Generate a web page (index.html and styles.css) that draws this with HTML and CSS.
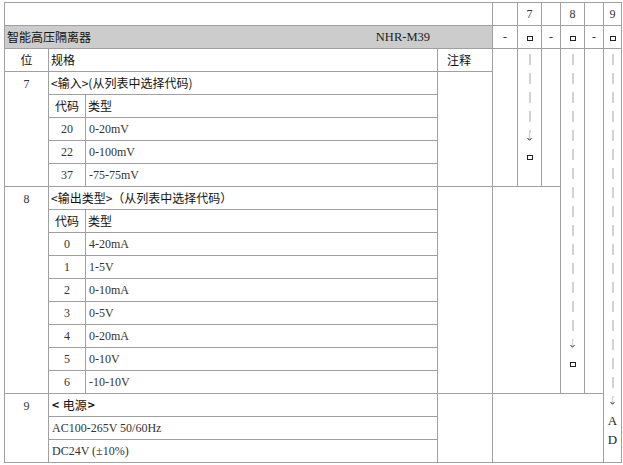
FILE: index.html
```html
<!DOCTYPE html>
<html lang="zh">
<head>
<meta charset="utf-8">
<title>智能高压隔离器 NHR-M39</title>
<link rel="stylesheet" href="styles.css">
</head>
<body>
<table class="spec">
  <colgroup>
    <col class="w-pos"><col class="w-code"><col class="w-type"><col class="w-note">
    <col class="w-sep"><col class="w-d7"><col class="w-sep2"><col class="w-d8"><col class="w-sep3"><col class="w-d9">
  </colgroup>
  <tr>
    <td colspan="4"></td><td></td><td class="c num">7</td><td></td><td class="c num">8</td><td></td><td class="c num">9</td>
  </tr>
  <tr>
    <td colspan="4" class="title">
      <div class="title-in"><span class="zh">智能高压隔离器</span><span class="model">NHR-M39</span></div>
    </td>
    <td class="c num">-</td><td class="c"><span class="box"></span></td>
    <td class="c num">-</td><td class="c"><span class="box"></span></td>
    <td class="c num">-</td><td class="c"><span class="box"></span></td>
  </tr>
  <tr>
    <td class="c zh">位</td>
    <td colspan="2" class="zh pl">规格</td>
    <td class="zh note-h">注释</td>
    <td rowspan="6"></td>
    <td rowspan="6" class="track-cell">
      <div class="track"><div class="dash d7"></div><svg class="arrow" width="7" height="8" viewBox="0 0 7 8"><path d="M3.5 0V7" stroke="#d4d4d8" stroke-width="1.5"/><path d="M1.5 5L3.5 7.3L5.5 5" fill="none" stroke="#333" stroke-width="1"/></svg><span class="box mt"></span></div>
    </td>
    <td rowspan="6"></td>
    <td rowspan="15" class="track-cell">
      <div class="track"><div class="dash d8"></div><svg class="arrow" width="7" height="8" viewBox="0 0 7 8"><path d="M3.5 0V7" stroke="#d4d4d8" stroke-width="1.5"/><path d="M1.5 5L3.5 7.3L5.5 5" fill="none" stroke="#333" stroke-width="1"/></svg><span class="box mt"></span></div>
    </td>
    <td rowspan="15"></td>
    <td rowspan="18" class="track-cell">
      <div class="track"><div class="dash d9"></div><svg class="arrow" width="7" height="8" viewBox="0 0 7 8"><path d="M3.5 0V7" stroke="#d4d4d8" stroke-width="1.5"/><path d="M1.5 5L3.5 7.3L5.5 5" fill="none" stroke="#333" stroke-width="1"/></svg><span class="letter first">A</span><span class="letter">D</span></div>
    </td>
  </tr>
  <tr>
    <td rowspan="5" class="c num top">7</td>
    <td colspan="2" class="zh pl">&lt;输入&gt;(从列表中选择代码)</td>
    <td rowspan="5"></td>
  </tr>
  <tr><td class="c zh">代码</td><td class="zh pl">类型</td></tr>
  <tr><td class="c num">20</td><td class="val">0-20mV</td></tr>
  <tr><td class="c num">22</td><td class="val">0-100mV</td></tr>
  <tr><td class="c num">37</td><td class="val">-75-75mV</td></tr>
  <tr>
    <td rowspan="9" class="c num top">8</td>
    <td colspan="2" class="zh pl">&lt;输出类型&gt;（从列表中选择代码）</td>
    <td rowspan="9"></td>
    <td rowspan="9" colspan="3"></td>
  </tr>
  <tr><td class="c zh">代码</td><td class="zh pl">类型</td></tr>
  <tr><td class="c num">0</td><td class="val">4-20mA</td></tr>
  <tr><td class="c num">1</td><td class="val">1-5V</td></tr>
  <tr><td class="c num">2</td><td class="val">0-10mA</td></tr>
  <tr><td class="c num">3</td><td class="val">0-5V</td></tr>
  <tr><td class="c num">4</td><td class="val">0-20mA</td></tr>
  <tr><td class="c num">5</td><td class="val">0-10V</td></tr>
  <tr><td class="c num">6</td><td class="val">-10-10V</td></tr>
  <tr>
    <td rowspan="3" class="c num top">9</td>
    <td colspan="2" class="zh pl"><span class="bracket">&lt;</span> 电源<span class="bracket">&gt;</span></td>
    <td rowspan="3"></td>
    <td rowspan="3" colspan="5"></td>
  </tr>
  <tr><td colspan="2" class="val">AC100-265V 50/60Hz</td></tr>
  <tr><td colspan="2" class="val">DC24V (±10%)</td></tr>
</table>
</body>
</html>
```
FILE: styles.css
```css
html, body {
  margin: 0;
  padding: 0;
  background: #ffffff;
}

body {
  font-family: "Liberation Serif", "Noto Sans CJK SC", serif;
  font-size: 12px;
  color: #222;
}

.spec {
  border-collapse: collapse;
  table-layout: fixed;
  width: 617px;
  margin: 2px 0 0 4px;
}

.w-pos { width: 44px; }
.w-code { width: 37px; }
.w-type { width: 352px; }
.w-note { width: 55px; }
.w-sep { width: 25px; }
.w-d7 { width: 24px; }
.w-sep2 { width: 19px; }
.w-d8 { width: 24px; }
.w-sep3 { width: 19px; }
.w-d9 { width: 18px; }

.spec td {
  border: 1px solid #a0a0a0;
  height: 22px;
  padding: 0;
  line-height: 16px;
  vertical-align: middle;
  overflow: hidden;
  white-space: nowrap;
}

.spec td.top {
  vertical-align: top;
  padding-top: 4px;
}

.c { text-align: center; }

.zh {
  font-family: "Noto Sans CJK SC", sans-serif;
  color: #111;
}

.bracket {
  font-weight: 700;
  padding: 0 1px;
}

.num { color: #333; }

.pl { padding-left: 2px !important; }

.val {
  padding-left: 3px !important;
  color: #333;
}

.note-h { padding-left: 9px !important; }

.title { background: #cccccc; }

.title-in {
  display: flex;
  align-items: center;
  padding-left: 2px;
}

.model {
  margin-left: auto;
  margin-right: 62px;
  font-size: 12.5px;
  color: #222;
}

.box {
  display: inline-block;
  width: 6px;
  height: 5px;
  border: 1px solid #222;
  box-sizing: border-box;
  vertical-align: middle;
}

.spec td.track-cell { vertical-align: top; }

.track {
  display: flex;
  flex-direction: column;
  align-items: center;
  padding-top: 5px;
}

.dash {
  width: 2px;
  background: repeating-linear-gradient(to bottom, #d2d2d8 0 11px, transparent 11px 19px);
}

.d7 { height: 79px; }
.d8 { height: 286px; }
.d9 { height: 343px; }

.arrow { display: block; }

.box.mt { margin-top: 14px; }

.letter {
  display: block;
  font-size: 13px;
  line-height: 19px;
  color: #222;
}

.letter.first { margin-top: 6px; }
```
